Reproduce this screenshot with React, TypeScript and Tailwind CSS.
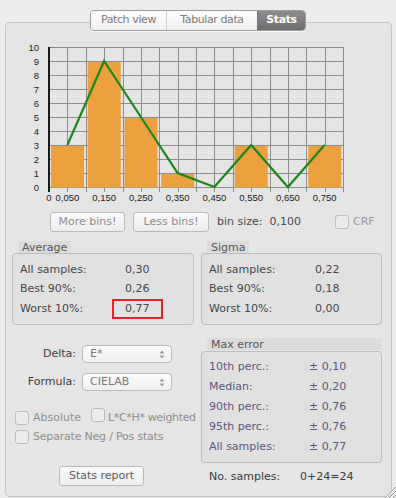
import React from 'react';

const counts = [3, 9, 5, 1, 0, 3, 0, 3];
const X0 = 29;
const Y0 = 147;
const SX = 367.5;
const SY = 14;
const px = (v: number) => X0 + v * SX;
const py = (n: number) => Y0 - n * SY;

function Histogram() {
  const ticks = Array.from({ length: 16 }, (_, i) => 0.05 * (i + 1));
  const labels = [0.05, 0.15, 0.25, 0.35, 0.45, 0.55, 0.65, 0.75];
  const points = counts.map((c, i) => `${px(0.05 + 0.1 * i)},${py(c)}`).join(' ');
  return (
    <svg width="330" height="166" className="block" style={{ fontFamily: '"Liberation Sans", Arial, sans-serif' }}>
      {/* grid */}
      {Array.from({ length: 11 }, (_, k) => (
        <line key={'h' + k} x1={px(0)} x2={px(0.8)} y1={py(k) + 0.5} y2={py(k) + 0.5} stroke="#8c8c8c" strokeWidth="1" />
      ))}
      {ticks.map((t, i) => (
        <line key={'v' + i} x1={Math.round(px(t)) + 0.5} x2={Math.round(px(t)) + 0.5} y1={py(10)} y2={Y0 + 5} stroke="#8c8c8c" strokeWidth="1" />
      ))}
      {/* bars */}
      {counts.map((c, i) =>
        c > 0 ? (
          <rect key={'b' + i} x={px(0.1 * i) + 2} y={py(c) + 1} width={33} height={c * SY - 0.5} fill="#eca13e" />
        ) : null
      )}
      {/* y axis */}
      <line x1={X0} x2={X0} y1={py(10)} y2={Y0 + 5} stroke="#1a1a1a" strokeWidth="2" />
      {/* frequency polygon */}
      <polyline points={points} fill="none" stroke="#1c861c" strokeWidth="2.2" strokeLinejoin="miter" />
      {/* y labels */}
      {Array.from({ length: 11 }, (_, k) => (
        <text key={'yl' + k} x={19} y={py(k) + 3.5} textAnchor="end" fontSize="9.5" fill="#1a1a1a">
          {k}
        </text>
      ))}
      {/* x labels */}
      <text x={px(0)} y={161} textAnchor="middle" fontSize="9.5" fill="#1a1a1a">0</text>
      {labels.map((l, i) => (
        <text key={'xl' + i} x={px(l)} y={161} textAnchor="middle" fontSize="9.5" fill="#1a1a1a">
          {l.toFixed(3).replace('.', ',')}
        </text>
      ))}
    </svg>
  );
}

function Checkbox() {
  return <span className="inline-block w-[14px] h-[14px] rounded-[3px] border border-[#bdbdbd] bg-[#ebebeb] shrink-0" />;
}

function Button({ label, w, dim }: { label: string; w: string; dim?: boolean }) {
  return (
    <div
      className={`${w} h-[20px] flex items-center justify-center rounded-[3px] border border-[#b9b9b9] bg-gradient-to-b from-[#fafafa] to-[#ececec] ${dim ? 'text-[#8e8e8e]' : 'text-[#5e5e5e]'}`}
    >
      {label}
    </div>
  );
}

function Select({ value }: { value: string }) {
  return (
    <div className="w-[90px] h-[18px] flex items-center justify-between pl-[7px] pr-[6px] rounded-[4px] border border-[#bcbcbc] bg-gradient-to-b from-[#fbfbfb] to-[#efefef] text-[#7a7a7a]">
      <span>{value}</span>
      <svg width="6" height="9" viewBox="0 0 6 9">
        <path d="M3 0.5 L5.5 3.5 L0.5 3.5 Z" fill="#9a9a9a" />
        <path d="M3 8.5 L5.5 5.5 L0.5 5.5 Z" fill="#9a9a9a" />
      </svg>
    </div>
  );
}

function GroupLabel({ text }: { text: string }) {
  return (
    <div className="ml-[6px] self-start h-[12px] px-[4px] flex items-center bg-[#dcdcdc] text-[#555555] leading-none">
      {text}
    </div>
  );
}

function StatRows({ rows, valueX, color, h }: { rows: [string, string][]; valueX: string; color: string; h: string }) {
  return (
    <>
      {rows.map(([k, v]) => (
        <div key={k} className={`flex items-center ${h} ${color}`}>
          <span className={valueX}>{k}</span>
          <span>{v}</span>
        </div>
      ))}
    </>
  );
}

export default function App() {
  return (
    <div
      className="relative w-[396px] h-[498px] overflow-hidden bg-[#ececec] text-[11px] text-[#444444]"
      style={{ fontFamily: '"DejaVu Sans", "Liberation Sans", sans-serif' }}
    >
      {/* segmented tabs */}
      <div className="relative z-10 pt-[10px] flex justify-center">
        <div className="flex h-[21px] rounded-[4px] border border-[#9c9c9c] overflow-hidden shadow-[0_1px_0_rgba(255,255,255,0.6)] text-[11px] tracking-[-0.4px]">
          <div className="w-[76px] flex items-center justify-center bg-gradient-to-b from-[#ffffff] to-[#f0f0f0] text-[#7a7a7a] border-r border-[#cfcfcf]">
            Patch view
          </div>
          <div className="w-[90px] flex items-center justify-center bg-gradient-to-b from-[#ffffff] to-[#f0f0f0] text-[#7a7a7a]">
            Tabular data
          </div>
          <div className="w-[48px] flex items-center justify-center bg-gradient-to-b from-[#8d8d8d] to-[#6e6e6e] text-white border-l border-[#777777] font-semibold">
            Stats
          </div>
        </div>
      </div>

      {/* main panel */}
      <div className="-mt-[9px] ml-[5px] w-[387px] h-[475px] rounded-[4px] border border-[#c6c6c6] bg-[#e5e5e5] flex flex-col">
        <div className="ml-[14px] mt-[17px]">
          <Histogram />
        </div>

        {/* bins row */}
        <div className="mt-[6px] ml-[44px] flex items-center h-[20px]">
          <Button label="More bins!" w="w-[75px]" dim />
          <div className="ml-[8px]">
            <Button label="Less bins!" w="w-[76px]" dim />
          </div>
          <span className="ml-[8px] w-[118px] text-[#4a4a4a]">bin size:&nbsp;&nbsp;0,100</span>
          <Checkbox />
          <span className="ml-[4px] text-[#9a9a9a]">CRF</span>
        </div>

        {/* average / sigma */}
        <div className="mt-[9px] ml-[6px] flex gap-[7px]">
          <div className="w-[182px] flex flex-col">
            <GroupLabel text="Average" />
            <div className="h-[72px] rounded-[4px] border border-[#bdbdbd] bg-[#e1e1e1] pt-[6px] pl-[7px] flex flex-col">
              <StatRows
                rows={[
                  ['All samples:', '0,30'],
                  ['Best 90%:', '0,26'],
                ]}
                valueX="w-[105px]"
                color="text-[#464646]"
                h="h-[19.5px]"
              />
              <div className="flex items-center h-[19.5px] text-[#464646]">
                <span className="w-[105px]">Worst 10%:</span>
                <span className="-ml-[13px] w-[51px] h-[20px] border-2 border-[#e3222b] flex items-center pl-[11px]">0,77</span>
              </div>
            </div>
          </div>
          <div className="w-[181px] flex flex-col">
            <GroupLabel text="Sigma" />
            <div className="h-[72px] rounded-[4px] border border-[#bdbdbd] bg-[#e1e1e1] pt-[6px] pl-[7px] flex flex-col">
              <StatRows
                rows={[
                  ['All samples:', '0,22'],
                  ['Best 90%:', '0,18'],
                  ['Worst 10%:', '0,00'],
                ]}
                valueX="w-[106px]"
                color="text-[#464646]"
                h="h-[19.5px]"
              />
            </div>
          </div>
        </div>

        {/* bottom */}
        <div className="ml-[6px] flex gap-[7px]">
          <div className="w-[182px] flex flex-col">
            <div className="mt-[20px] flex items-center">
              <span className="w-[64px] text-right text-[#3c3c3c]">Delta:</span>
              <div className="ml-[6px]">
                <Select value="E*" />
              </div>
            </div>
            <div className="mt-[10px] flex items-center">
              <span className="w-[64px] text-right text-[#3c3c3c]">Formula:</span>
              <div className="ml-[6px]">
                <Select value="CIELAB" />
              </div>
            </div>
            <div className="mt-[19px] ml-[3px] flex items-center h-[16px] text-[#8e8e8e]">
              <Checkbox />
              <span className="ml-[4px]">Absolute</span>
              <span className="ml-[10px]">
                <Checkbox />
              </span>
              <span className="ml-[3px] whitespace-nowrap tracking-[-0.35px]">L*C*H* weighted</span>
            </div>
            <div className="mt-[3px] ml-[3px] flex items-center h-[16px] text-[#8e8e8e]">
              <Checkbox />
              <span className="ml-[4px] tracking-[-0.2px] whitespace-nowrap">Separate Neg / Pos stats</span>
            </div>
            <div className="mt-[21px] ml-[47px]">
              <Button label="Stats report" w="w-[85px]" />
            </div>
          </div>

          <div className="w-[181px] flex flex-col">
            <div className="mt-[13px]">
              <GroupLabel text="Max error" />
            </div>
            <div className="mt-[1px] h-[112px] rounded-[4px] border border-[#bdbdbd] bg-[#e1e1e1] pt-[5px] pl-[7px] flex flex-col">
              <StatRows
                rows={[
                  ['10th perc.:', '± 0,10'],
                  ['Median:', '± 0,20'],
                  ['90th perc.:', '± 0,76'],
                  ['95th perc.:', '± 0,76'],
                  ['All samples:', '± 0,77'],
                ]}
                valueX="w-[100px]"
                color="text-[#56567c]"
                h="h-[20px]"
              />
            </div>
            <div className="mt-[4px] pl-[8px] flex items-center h-[20px] text-[#3c3c3c]">
              <span className="w-[91px]">No. samples:</span>
              <span>0+24=24</span>
            </div>
          </div>
        </div>
      </div>

      {/* resize grip */}
      <svg className="absolute right-0 bottom-0" width="13" height="13" viewBox="0 0 13 13">
        <line x1="2" y1="13" x2="13" y2="2" stroke="#9a9a9a" strokeWidth="1" />
        <line x1="6" y1="13" x2="13" y2="6" stroke="#9a9a9a" strokeWidth="1" />
        <line x1="10" y1="13" x2="13" y2="10" stroke="#9a9a9a" strokeWidth="1" />
        <line x1="3" y1="13" x2="13" y2="3" stroke="#ffffff" strokeWidth="1" />
        <line x1="7" y1="13" x2="13" y2="7" stroke="#ffffff" strokeWidth="1" />
      </svg>
    </div>
  );
}
